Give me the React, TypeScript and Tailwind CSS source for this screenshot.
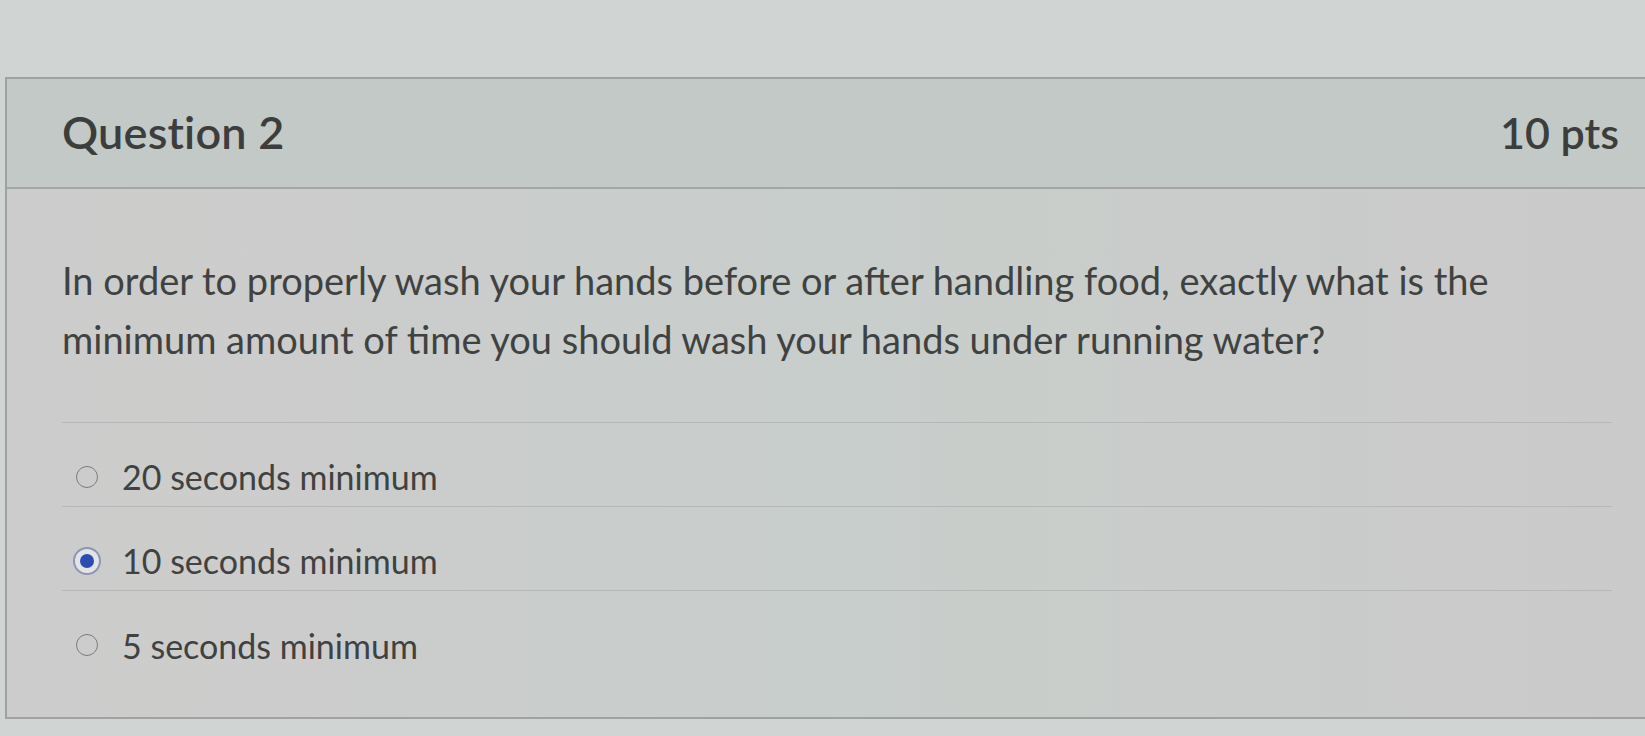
import React from 'react';

type Answer = {
  id: string;
  label: string;
  checked?: boolean;
};

const answers: Answer[] = [
  { id: 'a20', label: '20 seconds minimum' },
  { id: 'a10', label: '10 seconds minimum', checked: true },
  { id: 'a5', label: '5 seconds minimum' },
];

const Radio = ({ checked }: { checked?: boolean }) => {
  if (checked) {
    return (
      <span className="flex h-[24px] w-[24px] items-center justify-center rounded-full bg-[#e2e4e6] ring-[2px] ring-[#8d96b4]">
        <span className="h-[14px] w-[14px] rounded-full bg-[#2c4cb4]" />
      </span>
    );
  }
  return <span className="block h-[22px] w-[22px] rounded-full border-[1.5px] border-[#7a7d7c]" />;
};

const App = () => {
  return (
    <div
      className="h-[736px] w-[1645px] overflow-hidden bg-[#d0d4d2] pt-[77px] text-[#3b3e3d]"
      style={{ fontFamily: 'Lato, "Open Sans", sans-serif' }}
    >
      <div className="ml-[5px] w-[1700px] border-b-[2px] border-l-[2px] border-t-[2px] border-[#9ea3a1] bg-gradient-to-r from-[#cdcccc] via-[#c8cecb] to-[#cbcaca]">
        {/* header */}
        <div className="flex h-[110px] w-[1640px] items-center justify-between border-b-[2px] border-[#a2a7a5] bg-[#c3c9c6] pl-[55px] pr-[28px]">
          <h2 className="text-[45px] font-semibold tracking-[0.2px]">Question 2</h2>
          <span className="text-[43px] font-semibold">10 pts</span>
        </div>

        {/* body */}
        <div className="w-[1640px] pb-[42px] pl-[55px] pr-[35px] pt-[62px]">
          <p className="text-[38px] leading-[59px] text-[#3f4241]">
            In order to properly wash your hands before or after handling food, exactly what is the
            <br />
            minimum amount of time you should wash your hands under running water?
          </p>

          <div className="mt-[53px] border-t-[1.5px] border-[#b4b8b6]">
            {answers.map((a) => (
              <label
                key={a.id}
                className="flex h-[84px] items-center gap-[22px] border-b-[1.5px] border-[#b4b8b6] pl-[12px] pt-[24px] last:border-b-0"
              >
                <span className="flex w-[26px] justify-center">
                  <Radio checked={a.checked} />
                </span>
                <span className="text-[34px] text-[#3f4241]">{a.label}</span>
              </label>
            ))}
          </div>
        </div>
      </div>
    </div>
  );
};

export default App;
